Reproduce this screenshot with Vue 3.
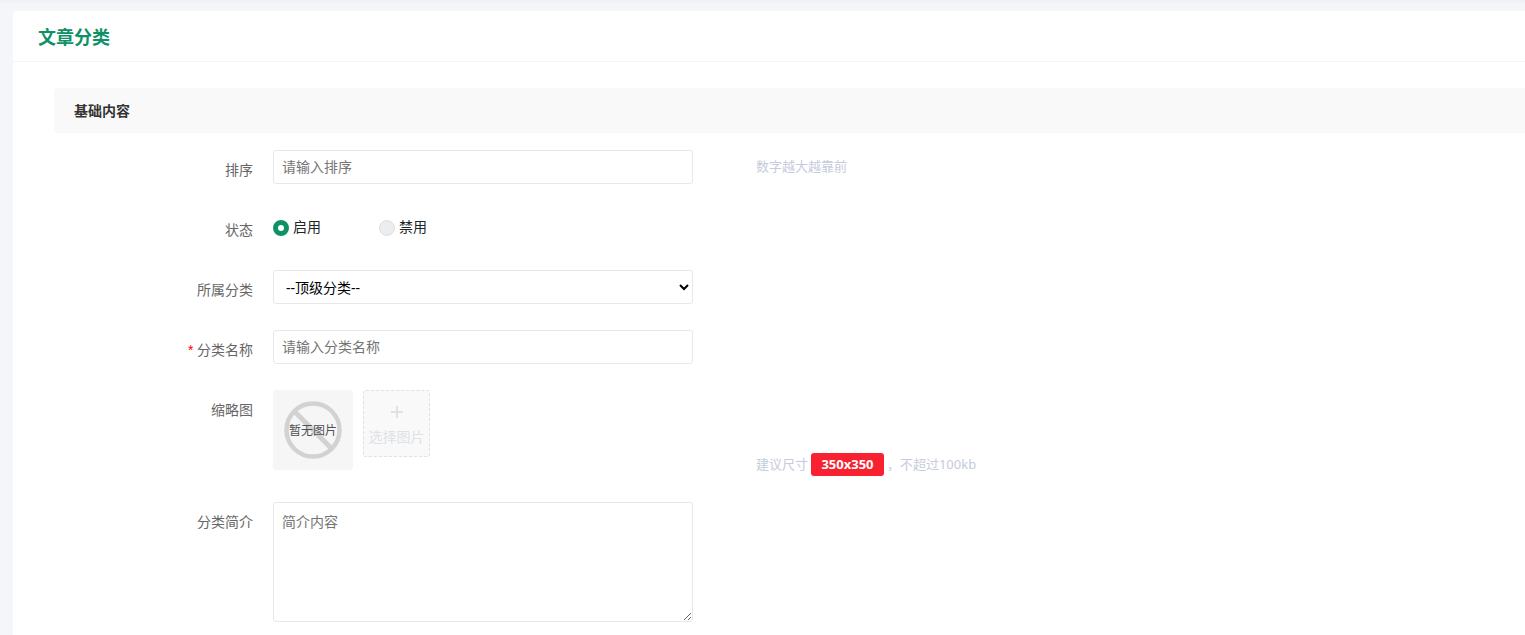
<script setup>
import { ref } from 'vue'

const form = ref({ sort: '', status: 'on', parent: '0', name: '', intro: '' })
</script>

<template>
  <div class="page">
    <main class="card">
      <header class="card-header">
        <h1>文章分类</h1>
      </header>
      <form class="card-body" @submit.prevent>
        <h2 class="section-title">基础内容</h2>

        <div class="row">
          <label class="label" for="sort">排序</label>
          <input id="sort" v-model="form.sort" class="control" type="text" placeholder="请输入排序" />
          <p class="hint">数字越大越靠前</p>
        </div>

        <div class="row" role="radiogroup" aria-labelledby="status-label">
          <span id="status-label" class="label">状态</span>
          <div class="radios">
            <label class="radio"><input v-model="form.status" type="radio" name="status" value="on" />启用</label>
            <label class="radio"><input v-model="form.status" type="radio" name="status" value="off" />禁用</label>
          </div>
        </div>

        <div class="row">
          <label class="label" for="parent">所属分类</label>
          <select id="parent" v-model="form.parent" class="control">
            <option value="0">--顶级分类--</option>
          </select>
        </div>

        <div class="row">
          <label class="label" for="name"><span class="required">*</span> 分类名称</label>
          <input id="name" v-model="form.name" class="control" type="text" placeholder="请输入分类名称" />
        </div>

        <div class="row row-media">
          <span class="label">缩略图</span>
          <div class="media">
            <svg class="thumb" viewBox="0 0 80 80" role="img" aria-label="暂无图片">
              <rect width="80" height="80" fill="#f6f6f6" />
              <g fill="none" stroke="#d2d2d2">
                <circle cx="40" cy="40" r="26.5" stroke-width="4.5" />
                <path d="M21.5 21.5 58.5 58.5" stroke-width="5" />
              </g>
              <text x="40" y="45" text-anchor="middle" font-size="12" fill="#505050">暂无图片</text>
            </svg>
            <button class="picker" type="button">
              <svg class="plus" viewBox="0 0 14 14" aria-hidden="true">
                <path d="M7 1v12M1 7h12" fill="none" stroke="#dee2e6" stroke-width="2" />
              </svg>
              <span>选择图片</span>
            </button>
          </div>
          <p class="hint">建议尺寸 <strong class="badge">350x350</strong> ，不超过100kb</p>
        </div>

        <div class="row">
          <label class="label" for="intro">分类简介</label>
          <textarea id="intro" v-model="form.intro" class="control" placeholder="简介内容"></textarea>
        </div>
      </form>
    </main>
  </div>
</template>

<style>
body {
  margin: 0;
  background: #f5f6fa;
}
</style>

<style scoped>
.page,
.page * {
  box-sizing: border-box;
}

.page {
  display: flex;
  min-height: 100vh;
  padding: 11px 0 0 13px;
  background: linear-gradient(#eff0f4, #f5f6fa 4px);
  color: #212529;
  font-family: "Noto Sans", "Noto Sans CJK SC", sans-serif;
  font-size: 14px;
  line-height: 20px;
}

.card {
  flex: 1;
  min-width: 0;
  background: #fff;
  border-radius: 4px 0 0 0;
}

.card-header {
  padding: 2px 25px 0;
  border-bottom: 1px solid #f5f5f5;
}

h1 {
  margin: 0;
  color: #0f9168;
  font-size: 18px;
  font-weight: 700;
  line-height: 48px;
}

.card-body {
  padding: 26px 0 0 41px;
}

.section-title {
  margin: 0 0 17px;
  padding: 0 20px;
  border-radius: 4px 0 0 4px;
  background: #f9f9f9;
  color: #333;
  font-size: 14px;
  font-weight: 700;
  line-height: 45px;
}

.row {
  display: grid;
  grid-template-columns: 199px minmax(0, 420px) minmax(0, 1fr);
  column-gap: 20px;
  align-items: start;
  min-height: 40px;
  margin-bottom: 20px;
}

.row-media {
  min-height: 92px;
}

.label {
  color: #666;
  line-height: 40px;
  text-align: right;
}

.required {
  color: #f00;
  font-family: "Liberation Sans", sans-serif;
}

.control {
  width: 100%;
  height: 34px;
  margin: 0;
  padding: 0 8px 2px;
  border: 1px solid #e8e8e8;
  border-radius: 3px;
  outline: none;
  background: #fff;
  color: #000;
  font: inherit;
}

.control::placeholder {
  color: #757575;
  opacity: 1;
}

select.control {
  padding: 0 1px 0 8px;
}

textarea.control {
  display: block;
  height: 120px;
  padding: 9px 8px;
  resize: vertical;
}

.radios {
  display: flex;
  gap: 58px;
}

.radio {
  display: flex;
  align-items: center;
  gap: 4px;
  line-height: 34px;
}

.radio input {
  appearance: none;
  width: 16px;
  height: 16px;
  margin: 2px 0 0;
  border: 1px solid #dcdfe6;
  border-radius: 50%;
  background: #ebedef;
}

.radio input:checked {
  border: 5px solid #0f9168;
  background: #fff;
}

.hint {
  margin: 0 0 0 43px;
  padding-bottom: 2px;
  color: #c5cbdc;
  font-size: 13px;
  line-height: 32px;
}

.row-media .hint {
  align-self: end;
}

.badge {
  display: inline-block;
  padding: 0 10px;
  border-radius: 3px;
  background: #f8212f;
  color: #fff;
  line-height: 23px;
}

.media {
  display: flex;
  align-items: flex-start;
  gap: 10px;
}

.thumb {
  width: 80px;
  height: 80px;
  border-radius: 3px;
}

.picker {
  display: flex;
  flex-direction: column;
  align-items: center;
  gap: 8px;
  width: 67px;
  height: 67px;
  padding: 14px 0 0;
  border: 1px dashed #dee2e6;
  border-radius: 3px;
  background: #f9f9f9;
  color: #dee2e6;
  font: inherit;
  white-space: nowrap;
}

.plus {
  flex: none;
  width: 14px;
  height: 14px;
}
</style>
